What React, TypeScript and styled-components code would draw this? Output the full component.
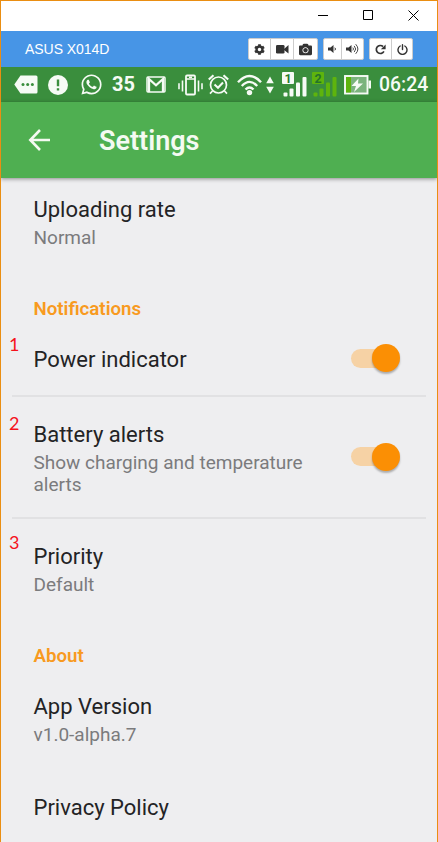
import React from "react";
import styled, { createGlobalStyle } from "styled-components";
import { FaCog, FaCamera, FaWhatsapp } from "react-icons/fa";

const GlobalStyle = createGlobalStyle`
  * { box-sizing: border-box; }
  html, body { margin: 0; padding: 0; overflow: hidden; }
  body { background: #eeeef0; font-family: Roboto, sans-serif; }
  svg { display: block; flex: none; }
`;

const Window = styled.div`
  width: 438px;
  height: 842px;
  overflow: hidden;
  background: #eeeef0;
  border: 1px solid #ea8e12;
  border-bottom: 0;
  display: flex;
  flex-direction: column;
`;

const TitleBar = styled.header`
  height: 30px;
  flex: none;
  background: #fff;
  display: flex;
  align-items: center;
  justify-content: flex-end;
  gap: 34px;
  padding: 0 18px 2px 0;
`;

const DeviceBar = styled.div`
  height: 36px;
  flex: none;
  background: #4795e6;
  display: flex;
  align-items: center;
  padding: 0 24px 0 24px;
`;

const DeviceName = styled.span`
  flex: 1;
  color: #fff;
  font: 14px/20px "Liberation Sans", Arial, sans-serif;
  letter-spacing: -0.05px;
`;

const ButtonGroup = styled.div`
  display: flex;
  height: 22px;
  margin-left: 5px;
  background: #fff;
  border: 1px solid #ccc;
  border-radius: 2px;
`;

const ToolButton = styled.button<{ $width: number }>`
  width: ${(p) => p.$width}px;
  padding: 0;
  border: 0;
  background: transparent;
  color: #333;
  display: flex;
  align-items: center;
  justify-content: center;
  & + & { border-left: 1px solid #ccc; }
`;

const StatusBar = styled.div`
  height: 35px;
  flex: none;
  background: #3a8e3d;
  color: #f6fbf5;
  display: flex;
  align-items: center;
  padding-left: 13px;
`;

const StatusItem = styled.div<{ $width: number; $gap?: number }>`
  width: ${(p) => p.$width}px;
  flex: none;
  margin-left: ${(p) => p.$gap ?? 0}px;
  white-space: nowrap;
`;

const StatusText = styled(StatusItem)<{ $weight: number; $size: number }>`
  font-size: ${(p) => p.$size}px;
  line-height: 35px;
  font-weight: ${(p) => p.$weight};
`;

const AppBar = styled.div`
  height: 76px;
  flex: none;
  background: #4faf51;
  box-shadow: 0 1px 4px rgba(0, 0, 0, 0.42);
  display: flex;
  align-items: center;
  padding-left: 27px;
  gap: 48px;
  z-index: 1;
`;

const PageTitle = styled.h1`
  margin: 2px 0 0;
  color: #f4faf2;
  font-size: 27px;
  line-height: 34px;
  font-weight: 600;
`;

const Content = styled.main`
  flex: none;
  display: flex;
  flex-direction: column;
`;

const Row = styled.section<{ $height: number; $top: number; $divider?: boolean }>`
  height: ${(p) => p.$height}px;
  flex: none;
  padding: ${(p) => p.$top}px 0 0 32.5px;
  position: relative;
  display: flex;
  &::after {
    content: "";
    display: ${(p) => (p.$divider ? "block" : "none")};
    position: absolute;
    left: 11px;
    right: 11px;
    bottom: -1px;
    height: 2px;
    background: #e1e1e3;
  }
`;

const RowText = styled.div`
  width: 317px;
`;

const RowTitle = styled.div`
  color: #232325;
  font-size: 22px;
  line-height: 28px;
`;

const RowSub = styled.div`
  width: 290px;
  margin-top: 3px;
  color: #7b7b7d;
  font-size: 19px;
  line-height: 21.5px;
`;

const SectionTitle = styled.h2`
  height: 41px;
  margin: 0;
  padding: 10px 0 0 32.5px;
  color: #f89a20;
  font-size: 18.7px;
  line-height: 22px;
  font-weight: 600;
`;

const Track = styled.div<{ $top: number }>`
  width: 46px;
  height: 19px;
  margin-top: ${(p) => p.$top}px;
  border-radius: 10px;
  background: #f6d2a5;
  display: flex;
  align-items: center;
  justify-content: flex-end;
`;

const Knob = styled.div`
  width: 28px;
  height: 28px;
  flex: none;
  margin-right: -3px;
  border-radius: 50%;
  background: #fb8f04;
  box-shadow: 0 2px 2px rgba(0, 0, 0, 0.28);
`;

const Marker = styled.span<{ $top: number }>`
  position: absolute;
  left: 8px;
  top: ${(p) => p.$top}px;
  color: #f5121c;
  font: 18px/20px Lato, sans-serif;
`;

const Toggle = ({ top }: { top: number }) => (
  <Track $top={top} role="switch" aria-checked="true">
    <Knob />
  </Track>
);

const Signal = ({ n, color, ink }: { n: string; color: string; ink: string }) => (
  <svg width="25" height="25" viewBox="0 0 25 25" fill={color}>
    <rect width="12" height="12" rx="1" />
    <text x="6" y="10.5" textAnchor="middle" fontFamily="Roboto" fontSize="12.5" fontWeight="700" fill={ink}>{n}</text>
    <rect x="1.5" y="20.5" width="4" height="4" rx="1" />
    <rect x="7.5" y="16.5" width="4" height="8" rx="1" />
    <rect x="14" y="10.5" width="4" height="14" rx="1" />
    <rect x="20.5" y="5" width="4" height="19.5" rx="1" />
  </svg>
);

export default function App() {
  return (
    <>
      <GlobalStyle />
      <Window>
        <TitleBar>
          <svg width="11" height="11" stroke="#000" fill="none"><path d="M0 5.5h10" /></svg>
          <svg width="11" height="11" stroke="#000" fill="none"><path d="M.5.5h9v9h-9z" /></svg>
          <svg width="11" height="11" stroke="#000" fill="none"><path d="M.5.5l10 10M10.500.5l-10 10" /></svg>
        </TitleBar>
        <DeviceBar>
          <DeviceName>ASUS X014D</DeviceName>
          <ButtonGroup>
            <ToolButton $width={21}><FaCog size={11} /></ToolButton>
            <ToolButton $width={23}>
              <svg width="13" height="10" fill="currentColor"><rect y="1" width="8.500" height="8.500" rx="1.300" /><path d="M8 5l4.500-4v8.500L8 6z" /></svg>
            </ToolButton>
            <ToolButton $width={24}><FaCamera size={13} /></ToolButton>
          </ButtonGroup>
          <ButtonGroup>
            <ToolButton $width={17}>
              <svg width="9" height="10" fill="currentColor"><path d="M0 3.500h2.500L5.500 1v8L2.500 6.500H0z" /><path d="M6.800 3.700q1.400 1.300 0 2.600" stroke="currentColor" fill="none" /></svg>
            </ToolButton>
            <ToolButton $width={22}>
              <svg width="13" height="12" fill="currentColor"><path d="M0 4.500h2.500L5.500 2v8L2.500 7.500H0z" /><path d="M6.800 4.600q1.400 1.400 0 2.800M8.200 2.900q3 3.100 0 6.200M9.700 1.200q4.400 4.800 0 9.600" stroke="currentColor" strokeWidth=".9" fill="none" /></svg>
            </ToolButton>
          </ButtonGroup>
          <ButtonGroup>
            <ToolButton $width={21}>
              <svg width="11" height="11" fill="none" stroke="currentColor" strokeWidth="1.700"><path d="M8.900 7.300A4 4 0 1 1 8 2.500" /><path d="M10.600.5v4.700H5.900z" fill="currentColor" stroke="none" /></svg>
            </ToolButton>
            <ToolButton $width={21}>
              <svg width="11" height="11" fill="none" stroke="currentColor" strokeWidth="1.400" strokeLinecap="round"><path d="M3.200 2a4.500 4.500 0 1 0 4.600 0M5.500.8v4.700" /></svg>
            </ToolButton>
          </ButtonGroup>
        </DeviceBar>
        <StatusBar>
          <StatusItem $width={24}>
            <svg width="24" height="19" fill="currentColor"><path d="M6.500.5H22q1.500 0 1.500 1.500v15q0 1.500-1.500 1.500H6.500L.3 9.500z" /><g fill="#3a8e3d"><circle cx="9" cy="9.500" r="1.500" /><circle cx="13.700" cy="9.500" r="1.500" /><circle cx="18.400" cy="9.500" r="1.500" /></g></svg>
          </StatusItem>
          <StatusItem $width={20} $gap={10}>
            <svg width="20" height="20" fill="currentColor"><circle cx="10" cy="10" r="10" /><path d="M8.800 4.500h2.400v6.800H8.800zM8.800 13.200h2.400v2.400H8.800z" fill="#3a8e3d" /></svg>
          </StatusItem>
          <StatusItem $width={22} $gap={12}><FaWhatsapp size={23} /></StatusItem>
          <StatusText $width={24} $gap={10} $weight={700} $size={20}>35</StatusText>
          <StatusItem $width={20} $gap={10}>
            <svg width="20" height="17" fill="none" stroke="currentColor"><rect x="1" y="1" width="18" height="15" rx="1" strokeWidth="1.500" /><path d="M3 16V3l7 6.300L17 3v13" strokeWidth="2.300" /></svg>
          </StatusItem>
          <StatusItem $width={25} $gap={12}>
            <svg width="25" height="22" fill="none" stroke="currentColor" strokeWidth="1.600"><rect x="8" y="1.500" width="9" height="19" rx="1" strokeWidth="1.800" /><path d="M8 5h9M11 3.200h3M4.500 6.500v11M1 9.300v6M20.500 6.500v11M24 9.300v6" /></svg>
          </StatusItem>
          <StatusItem $width={21} $gap={5}>
            <svg width="21" height="21" fill="none" stroke="currentColor" strokeWidth="1.700"><circle cx="10.500" cy="11" r="8" /><path d="M.8 5.500l4.700-4.200M15.500 1.300l4.700 4.200" strokeWidth="2.200" /><path d="M6.500 10.500l3.500 3.300 5-5.300" strokeWidth="2" /><path d="M4.500 17l-2.500 2.700M16.500 17l2.500 2.700" /></svg>
          </StatusItem>
          <StatusItem $width={25} $gap={8}>
            <svg width="25" height="22" fill="none" stroke="currentColor" strokeWidth="2.400"><path d="M1 8.200q11.500-12.500 23 0M4.800 12q7.700-8.300 15.400 0M8.500 15.500q4-4 8 0" /><circle cx="12.500" cy="18.600" r="2.700" fill="currentColor" stroke="none" /></svg>
          </StatusItem>
          <StatusItem $width={8} $gap={4}>
            <svg width="8" height="18" fill="currentColor"><path d="M4 .5l3.800 6.700H.2zM4 17.500L7.800 10.800H.2z" /></svg>
          </StatusItem>
          <StatusItem $width={25} $gap={8}><Signal n="1" color="#f6fbf5" ink="#287b2b" /></StatusItem>
          <StatusItem $width={25} $gap={5}><Signal n="2" color="#5eb40d" ink="#24742a" /></StatusItem>
          <StatusItem $width={27} $gap={7}>
            <svg width="27" height="20"><rect x="1" y="1" width="22.500" height="17.500" fill="#7bb47d" stroke="#f6fbf5" strokeWidth="1.900" /><path d="M2 2h5v15.500H2z" fill="#5eb40d" /><path d="M24.500 5.500H27v8h-2.500z" fill="#f6fbf5" /><path d="M14.500 3.500l-7 7.500h4.500l-2 6 9-8.500h-5z" fill="#f6fbf5" /></svg>
          </StatusItem>
          <StatusText $width={49} $gap={8} $weight={500} $size={19.4}>06:24</StatusText>
        </StatusBar>
        <AppBar>
          <svg width="23" height="24" fill="none" stroke="#f4faf2" strokeWidth="2.600"><path d="M22 12H2.500M12 2L2.300 12l9.700 10" /></svg>
          <PageTitle>Settings</PageTitle>
        </AppBar>
        <Content>
          <Row $height={110} $top={18}>
            <RowText><RowTitle>Uploading rate</RowTitle><RowSub>Normal</RowSub></RowText>
          </Row>
          <SectionTitle>Notifications</SectionTitle>
          <Row $height={67} $top={17} $divider>
            <Marker $top={5}>1</Marker>
            <RowText><RowTitle>Power indicator</RowTitle></RowText>
            <Toggle top={2.5} />
          </Row>
          <Row $height={122} $top={25} $divider>
            <Marker $top={17}>2</Marker>
            <RowText><RowTitle>Battery alerts</RowTitle><RowSub>Show charging and temperature alerts</RowSub></RowText>
            <Toggle top={26} />
          </Row>
          <Row $height={117} $top={25}>
            <Marker $top={14}>3</Marker>
            <RowText><RowTitle>Priority</RowTitle><RowSub>Default</RowSub></RowText>
          </Row>
          <SectionTitle>About</SectionTitle>
          <Row $height={101} $top={17}>
            <RowText><RowTitle>App Version</RowTitle><RowSub>v1.0-alpha.7</RowSub></RowText>
          </Row>
          <Row $height={65} $top={17}>
            <RowText><RowTitle>Privacy Policy</RowTitle></RowText>
          </Row>
        </Content>
      </Window>
    </>
  );
}
